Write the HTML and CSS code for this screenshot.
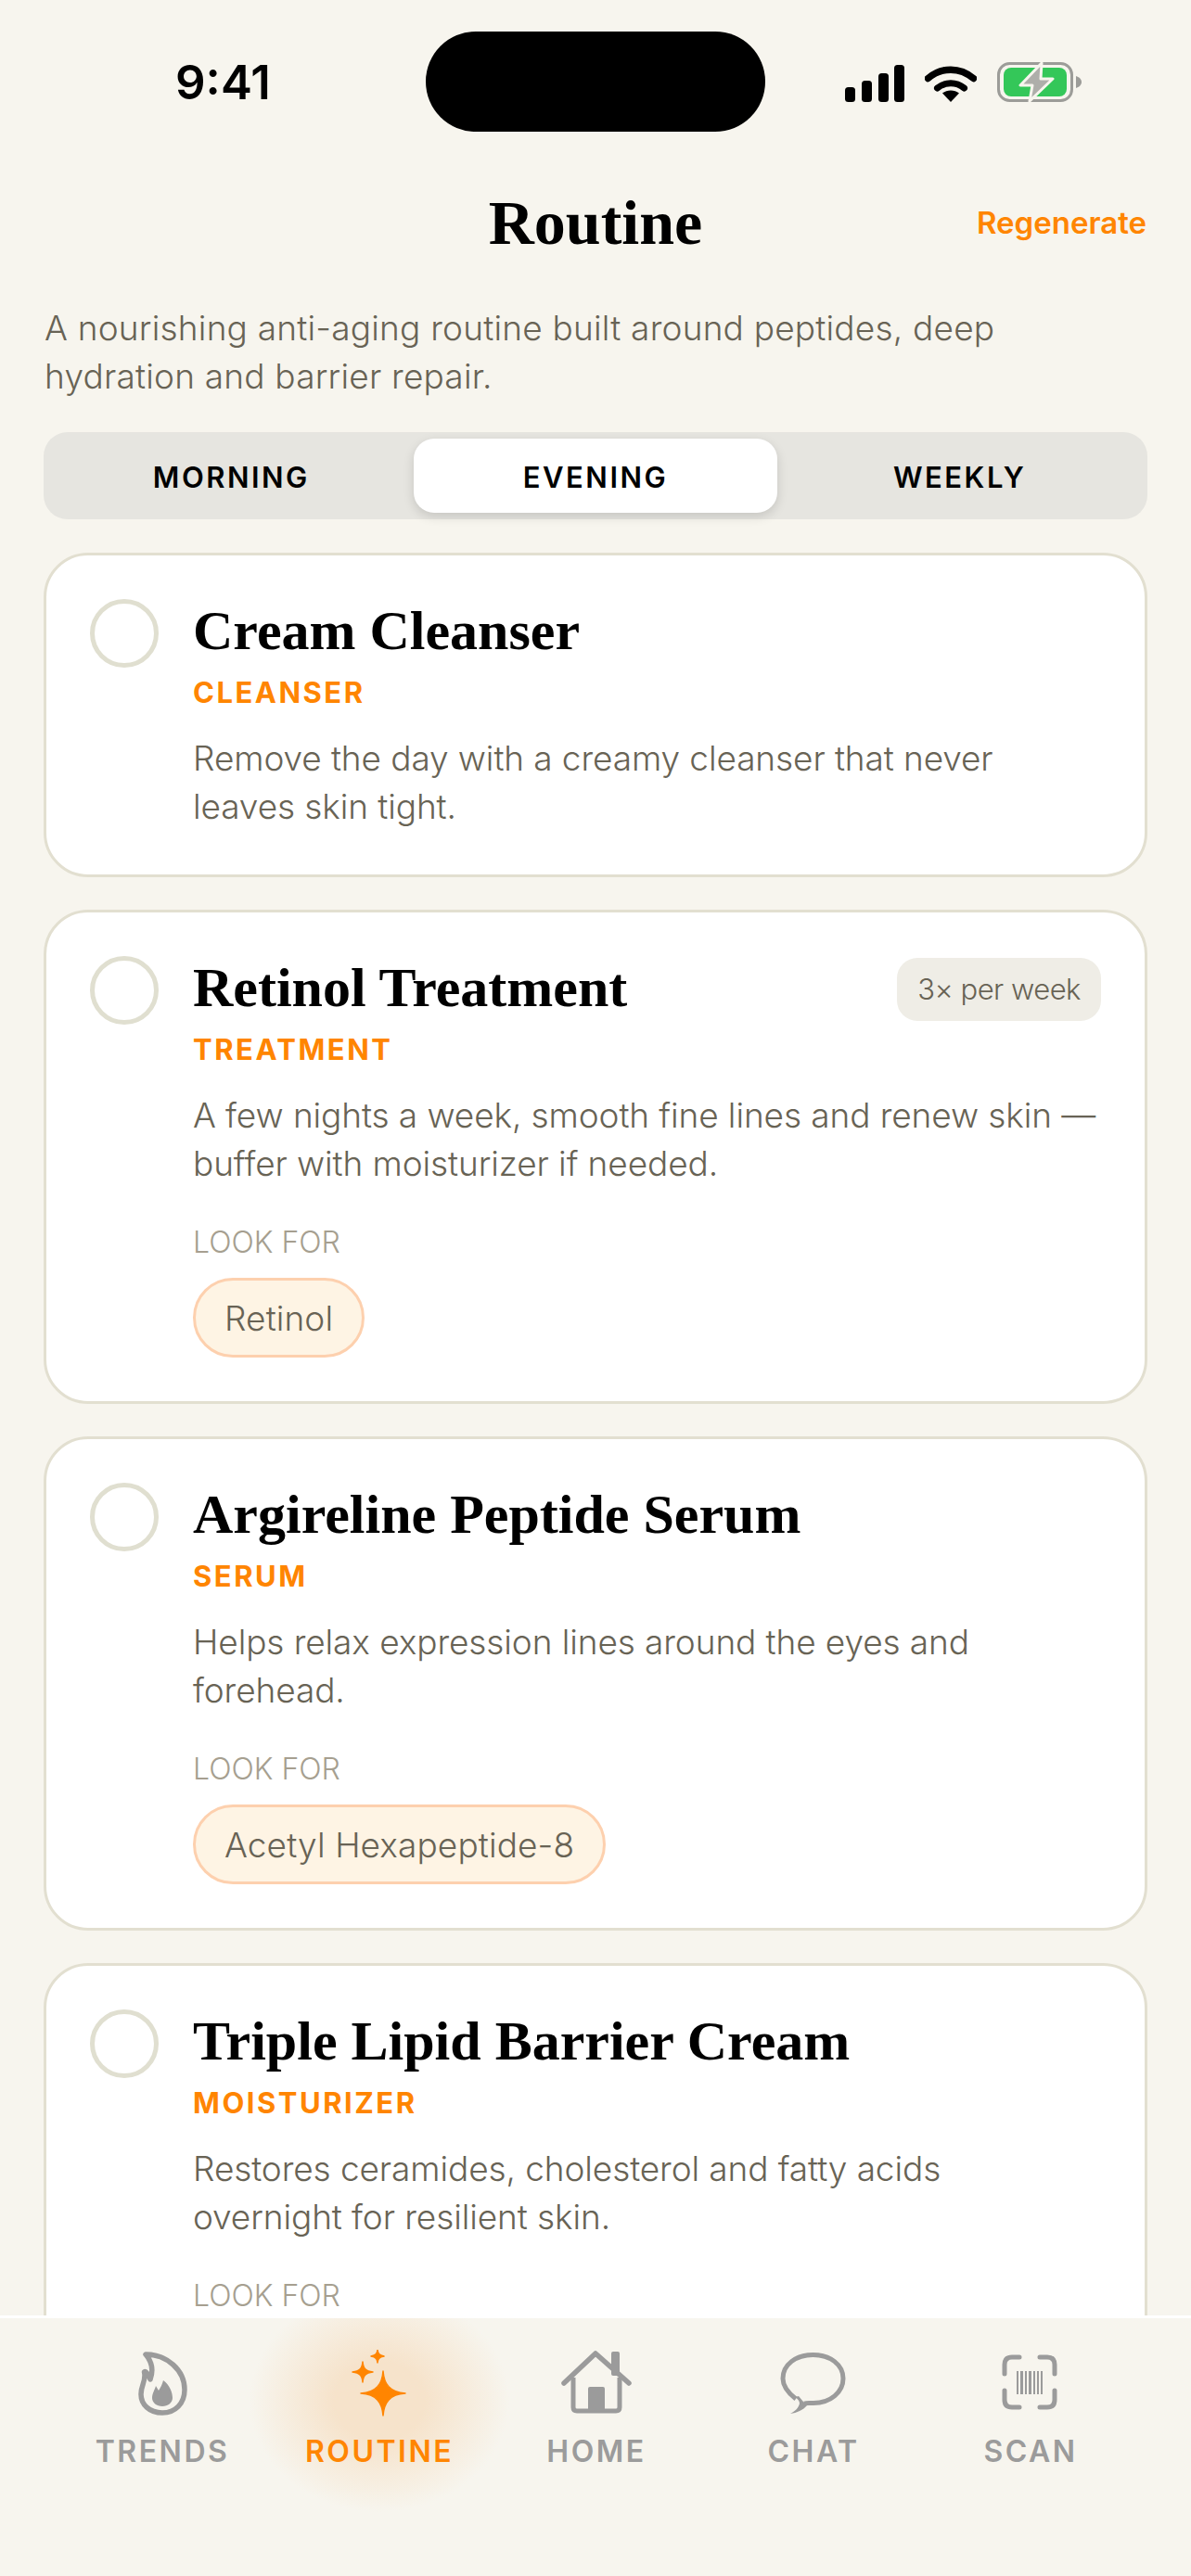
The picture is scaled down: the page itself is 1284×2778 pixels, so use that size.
FILE: index.html
```html
<!DOCTYPE html>
<html lang="en">
<head>
    <meta charset="UTF-8">
    <title>Routine</title>
    <link rel="stylesheet" href="styles.css">
</head>
<body>
    <div class="status-bar">
        <span class="time">9:41</span>
        <div class="island"></div>
        <div class="status-icons">
            <svg width="64" height="40" viewBox="0 0 64 40">
                <rect x="0" y="24" width="11" height="16" rx="3.5"/>
                <rect x="18" y="17" width="11" height="23" rx="3.5"/>
                <rect x="36" y="9" width="11" height="31" rx="3.5"/>
                <rect x="53" y="0" width="11" height="40" rx="3.5"/>
            </svg>
            <svg width="56" height="41" viewBox="0 0 56 41">
                <path d="M3.5 15.5C18 3 38 3 52.500 15.500" fill="none" stroke="#000" stroke-width="7.500" stroke-linecap="round"/>
                <path d="M13.500 26C22 19 34 19 42.500 26" fill="none" stroke="#000" stroke-width="7" stroke-linecap="round"/>
                <path d="M28 41L19 31.500C24 27.500 32 27.500 37 31.500Z"/>
            </svg>
            <svg class="battery" width="91" height="43" viewBox="0 0 91 43">
                <rect x="1.500" y="1.500" width="79" height="40" rx="12" fill="none" stroke="#9c9c98" stroke-width="3"/>
                <rect x="7" y="6" width="68" height="31" rx="8" fill="#34c759"/>
                <path d="M85 15C88 16 91 18 91 21.500C91 25 88 27 85 28Z" fill="#9c9c98"/>
                <path d="M48 1L25 25H38L35 42L60 18H47Z" fill="#aeaeaa" stroke="#f7f5ee" stroke-width="3" stroke-linejoin="round"/>
            </svg>
        </div>
    </div>

    <header class="page-header">
        <span></span>
        <h1>Routine</h1>
        <a class="regenerate">Regenerate</a>
    </header>

    <p class="intro">A nourishing anti-aging routine built around peptides, deep<br>hydration and barrier repair.</p>

    <div class="tabs">
        <div class="tab">MORNING</div>
        <div class="tab active">EVENING</div>
        <div class="tab">WEEKLY</div>
    </div>

    <main class="steps">
        <section class="card">
            <div class="check"></div>
            <div class="card-body">
                <h2>Cream Cleanser</h2>
                <div class="step-type">CLEANSER</div>
                <p class="step-desc">Remove the day with a creamy cleanser that never leaves skin tight.</p>
            </div>
        </section>

        <section class="card">
            <div class="check"></div>
            <div class="card-body">
                <div class="title-row">
                    <h2>Retinol Treatment</h2>
                    <span class="freq">3× per week</span>
                </div>
                <div class="step-type">TREATMENT</div>
                <p class="step-desc">A few nights a week, smooth fine lines and renew skin — buffer with moisturizer if needed.</p>
                <div class="look-for">LOOK FOR</div>
                <span class="chip">Retinol</span>
            </div>
        </section>

        <section class="card">
            <div class="check"></div>
            <div class="card-body">
                <h2>Argireline Peptide Serum</h2>
                <div class="step-type">SERUM</div>
                <p class="step-desc">Helps relax expression lines around the eyes and forehead.</p>
                <div class="look-for">LOOK FOR</div>
                <span class="chip">Acetyl Hexapeptide-8</span>
            </div>
        </section>

        <section class="card">
            <div class="check"></div>
            <div class="card-body">
                <h2>Triple Lipid Barrier Cream</h2>
                <div class="step-type">MOISTURIZER</div>
                <p class="step-desc">Restores ceramides, cholesterol and fatty acids<br>overnight for resilient skin.</p>
                <div class="look-for">LOOK FOR</div>
            </div>
        </section>
    </main>

    <nav class="bottom-nav">
        <div class="nav-item">
            <svg width="80" height="72" viewBox="0 0 80 72">
                <path d="M22 5C45 5 64 22 64 43C64 58 54 68 40 68C26 68 17 59 17 48C17 38 23 33 20.500 24C22 22 25 27 27 32C31 21 28 12 22 5Z" fill="none" stroke="#9b9b9b" stroke-width="5.500" stroke-linejoin="round"/>
                <path d="M41 33C48 38 51 46 51 52C51 57 46 61 40 61C34 61 29 57 29 52C29 47 32 43 33 39L36 44C38 41 40 37 41 33Z" fill="#9b9b9b"/>
            </svg>
            <span>TRENDS</span>
        </div>
        <div class="nav-item active">
            <svg width="80" height="72" viewBox="0 0 80 72">
                <g fill="#ff8500" stroke="#ff8500" stroke-width="1.500" stroke-linejoin="round">
                    <path d="M44 23C45 37 51 46 68 47C51 48 45 57 44 71C43 57 37 48 20 47C37 46 43 37 44 23Z"/>
                    <path d="M22 13C22.500 20 25 23 33 24C25 25 22.500 28 22 35C21.500 28 19 25 11 24C19 23 21.500 20 22 13Z"/>
                    <path d="M38 0C38.300 4 39.500 6 45 7C39.500 8 38.300 10 38 14C37.700 10 36.500 8 31 7C36.500 6 37.700 4 38 0Z"/>
                </g>
            </svg>
            <span>ROUTINE</span>
        </div>
        <div class="nav-item">
            <svg width="80" height="72" viewBox="0 0 80 72">
                <rect x="56" y="2" width="9" height="26" rx="2" fill="#9b9b9b"/>
                <path d="M5 36L39 4L75 36" fill="none" stroke="#9b9b9b" stroke-width="5.500" stroke-linecap="round" stroke-linejoin="round"/>
                <path d="M15 30V62Q15 66 19 66H61Q65 66 65 62V30" fill="none" stroke="#9b9b9b" stroke-width="5"/>
                <path d="M31 42Q31 40 33 40H47Q49 40 49 42V66H31Z" fill="#9b9b9b"/>
            </svg>
            <span>HOME</span>
        </div>
        <div class="nav-item">
            <svg width="80" height="72" viewBox="0 0 80 72">
                <path d="M21 53C12 46 7 39 7 31C7 16 21 5.500 39.500 5.500C58 5.500 72 16 72 31C72 46 58 57.500 40 57.500C36 57.500 33 57 30 58" fill="none" stroke="#9b9b9b" stroke-width="5"/>
                <path d="M20 51C23 53 25 55 25 58C24 62 21 66 15 69C22 68 29 65 33 60L29 56L24 50Z" fill="#9b9b9b"/>
            </svg>
            <span>CHAT</span>
        </div>
        <div class="nav-item">
            <svg width="80" height="72" viewBox="0 0 80 72">
                <g fill="none" stroke="#9b9b9b" stroke-width="5" stroke-linecap="round">
                    <path d="M12 26V16Q12 8 20 8H28"/>
                    <path d="M50 8H58Q66 8 66 16V26"/>
                    <path d="M12 44V54Q12 62 20 62H28"/>
                    <path d="M50 62H58Q66 62 66 54V44"/>
                </g>
                <g fill="#9b9b9b">
                    <rect x="25" y="23" width="2" height="25"/>
                    <rect x="29" y="23" width="3" height="25"/>
                    <rect x="34" y="23" width="2" height="25"/>
                    <rect x="38" y="23" width="3" height="25"/>
                    <rect x="43" y="23" width="2" height="25"/>
                    <rect x="47" y="23" width="2" height="25"/>
                    <rect x="51" y="23" width="2" height="25"/>
                </g>
            </svg>
            <span>SCAN</span>
        </div>
    </nav>
</body>
</html>
```
FILE: styles.css
```css
/* General Reset */
* {
    box-sizing: border-box;
}

body {
    font-family: 'Inter', sans-serif;
    margin: 0;
    height: 2778px;
    overflow: hidden;
    display: flex;
    flex-direction: column;
    background-color: #f7f5ee;
    color: #000;
}

/* Status Bar */
.status-bar {
    display: grid;
    grid-template-columns: 1fr 366px 1fr;
    align-items: center;
    padding-top: 34px;
}

.time {
    padding-left: 189px;
    font-size: 51px;
    font-weight: 600;
}

.island {
    height: 108px;
    background: #000;
    border-radius: 54px;
}

.status-icons {
    display: flex;
    align-items: flex-end;
    gap: 22px;
    padding-left: 86px;
}

/* Header */
.page-header {
    display: grid;
    grid-template-columns: 1fr auto 1fr;
    align-items: center;
    padding: 0 48px;
    margin-top: 58px;
}

.page-header h1 {
    margin: 0;
    font-family: 'Liberation Serif', serif;
    font-size: 68px;
    line-height: 80px;
    font-weight: 700;
}

.regenerate {
    justify-self: end;
    color: #ff8500;
    font-size: 33px;
    font-weight: 600;
}

.intro {
    margin: 48px 48px 0;
    font-size: 37px;
    line-height: 52px;
    font-weight: 300;
    letter-spacing: 0.2px;
    color: #686355;
}

/* Tabs */
.tabs {
    display: flex;
    height: 94px;
    margin: 34px 47px 0;
    padding: 7px 6px;
    background: #e6e5e0;
    border-radius: 26px;
}

.tab {
    flex: 1;
    display: flex;
    align-items: center;
    justify-content: center;
    padding-top: 2px;
    font-size: 31px;
    font-weight: 600;
    letter-spacing: 2.5px;
    border-radius: 22px;
}

.tab.active {
    background: #fff;
    box-shadow: 0 4px 12px rgba(0, 0, 0, 0.14);
}

/* Step Cards */
.steps {
    flex: 1;
    min-height: 0;
    overflow: hidden;
    display: flex;
    flex-direction: column;
    gap: 35px;
    padding: 36px 47px 0;
}

.card {
    flex-shrink: 0;
    display: flex;
    gap: 37px;
    padding: 47px;
    background: #fff;
    border: 3px solid #e2dfd0;
    border-radius: 48px;
}

.check {
    flex-shrink: 0;
    width: 74px;
    height: 74px;
    border: 5px solid #e0dfd0;
    border-radius: 50%;
}

.card-body {
    flex: 1;
    min-width: 0;
}

.title-row {
    display: flex;
    justify-content: space-between;
    align-items: center;
}

.card h2 {
    margin: -3px 0 0;
    font-family: 'Liberation Serif', serif;
    font-size: 60px;
    line-height: 74px;
    font-weight: 700;
}

.freq {
    height: 68px;
    padding: 0 22px;
    display: flex;
    align-items: center;
    background: #efede6;
    border-radius: 22px;
    font-size: 31px;
    font-weight: 300;
    letter-spacing: -0.5px;
    color: #686355;
}

.step-type {
    margin-top: 10px;
    font-size: 31px;
    line-height: 40px;
    font-weight: 700;
    letter-spacing: 2.5px;
    color: #ff8500;
}

.step-desc {
    margin: 25px 0 0;
    font-size: 37px;
    line-height: 52px;
    font-weight: 300;
    letter-spacing: -0.1px;
    color: #686355;
}

.look-for {
    margin-top: 41px;
    font-size: 32px;
    line-height: 36px;
    font-weight: 300;
    color: #a69f90;
}

.chip {
    display: inline-flex;
    align-items: center;
    height: 86px;
    margin-top: 20px;
    padding: 0 31px;
    background: #fef4e4;
    border: 3px solid #fdd0ae;
    border-radius: 43px;
    font-size: 37px;
    font-weight: 300;
    letter-spacing: 0.1px;
    color: #686355;
}

/* Bottom Navigation */
.bottom-nav {
    flex-shrink: 0;
    height: 281px;
    display: grid;
    grid-template-columns: repeat(5, 234px);
    padding: 34px 0 0 58px;
    background: #f7f5ee;
    border-top: 3px solid #fff;
    overflow: hidden;
}

.nav-item {
    display: flex;
    flex-direction: column;
    align-items: center;
    color: #9b9b9b;
    font-size: 32px;
    font-weight: 600;
    letter-spacing: 2.5px;
}

.nav-item span {
    margin-top: 18px;
}

.nav-item.active {
    position: relative;
    color: #ff8500;
}

.nav-item.active svg,
.nav-item.active span {
    position: relative;
}

/* soft glow behind the active tab */
.nav-item.active::before {
    content: "";
    position: absolute;
    left: -23px;
    top: -65px;
    width: 280px;
    height: 240px;
    background: radial-gradient(closest-side, #f6e3cb 0, #f6e3cb 35%, rgba(247, 245, 238, 0) 100%);
}
```
